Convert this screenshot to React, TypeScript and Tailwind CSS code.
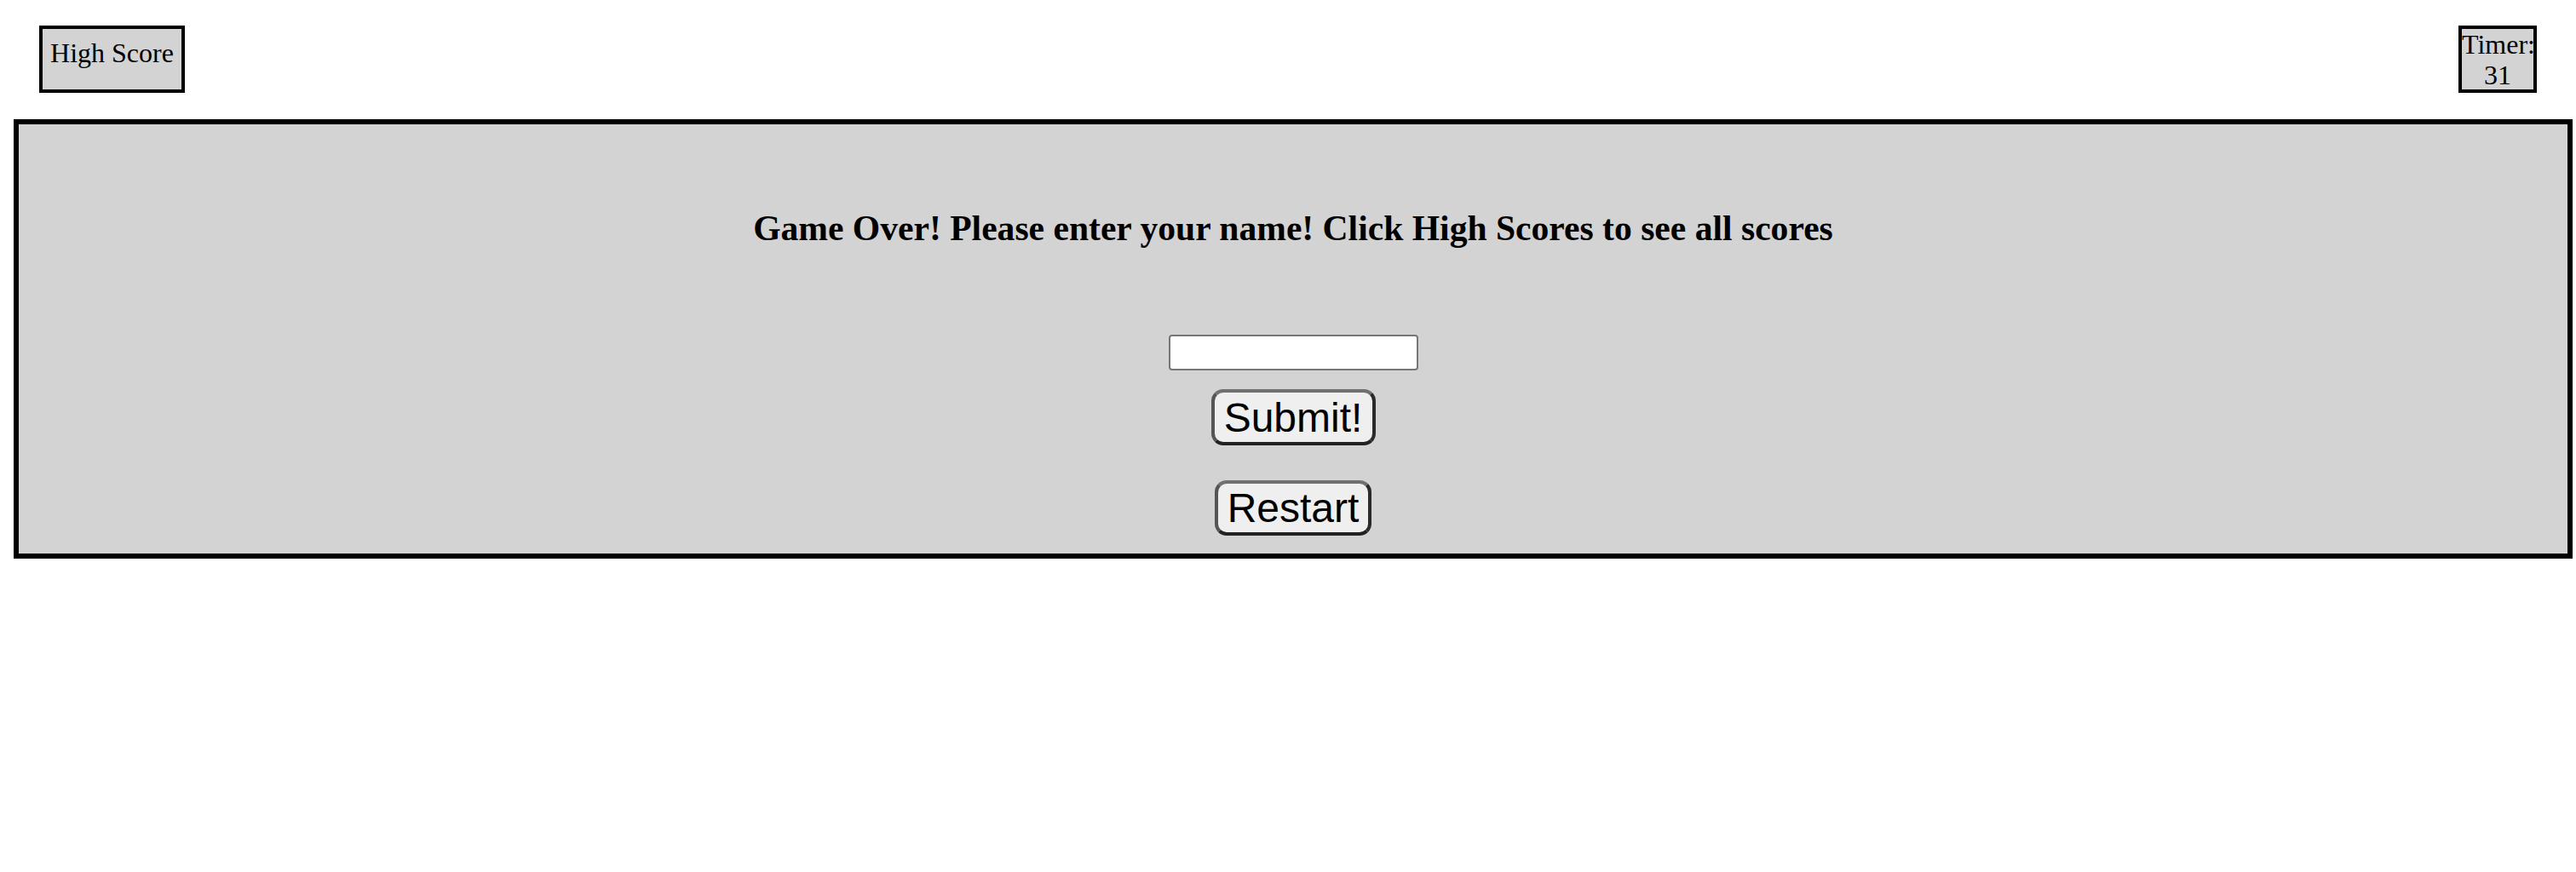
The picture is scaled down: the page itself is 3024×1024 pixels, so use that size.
import React from "react";

export default function App() {
  return (
    <div className="w-[3024px] h-[1024px] bg-white" style={{ fontFamily: '"Liberation Serif", "Times New Roman", serif' }}>
      <div className="flex justify-between items-start px-[46px] pt-[30px] h-[140px]">
        <div className="w-[171px] h-[79px] border-4 border-black bg-[#d3d3d3] text-center text-[32px] leading-[37px] pt-[10px] text-black">
          High Score
        </div>
        <div className="w-[92px] h-[79px] border-4 border-black bg-[#d3d3d3] text-center text-[32px] leading-[36px] pt-0 text-black">
          Timer:
          <br />
          31
        </div>
      </div>
      <div className="ml-[16px] w-[3004px] h-[516px] border-[6px] border-black bg-[#d3d3d3] flex flex-col items-center pt-[98px]">
        <h2 className="text-[41.6px] leading-[48px] font-bold text-black">
          Game Over! Please enter your name! Click High Scores to see all scores
        </h2>
        <input
          type="text"
          className="mt-[101px] w-[293px] h-[42px] bg-white border-2 border-[#767676] rounded-[4px] outline-none"
        />
        <button
          className="mt-[22px] w-[193px] h-[66px] bg-[#efefef] border-[4px] border-t-[#707070] border-l-[#555555] border-r-[#2a2a2a] border-b-[#222222] rounded-[14px] text-[48px] leading-[55px] text-black flex items-center justify-center"
          style={{ fontFamily: '"Liberation Sans", Arial, sans-serif' }}
        >
          Submit!
        </button>
        <button
          className="mt-[41px] w-[184px] h-[65px] bg-[#efefef] border-[4px] border-t-[#707070] border-l-[#555555] border-r-[#2a2a2a] border-b-[#222222] rounded-[14px] text-[48px] leading-[55px] text-black flex items-center justify-center"
          style={{ fontFamily: '"Liberation Sans", Arial, sans-serif' }}
        >
          Restart
        </button>
      </div>
    </div>
  );
}
